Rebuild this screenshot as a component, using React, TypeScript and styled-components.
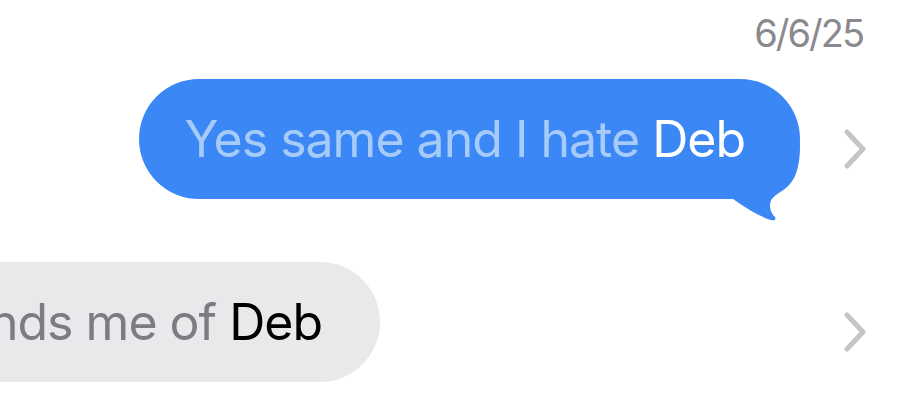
import React from "react";
import styled, { createGlobalStyle } from "styled-components";

const Global = createGlobalStyle`
  html, body { margin: 0; padding: 0; background: #ffffff; }
  body { overflow: hidden; font-family: Inter, "Noto Sans", "Liberation Sans", sans-serif; }
`;

const Screen = styled.div`
  width: 916px;
  height: 418px;
  overflow: hidden;
  display: flex;
  flex-direction: column;
  background: #ffffff;
`;

const DateLabel = styled.div`
  align-self: flex-end;
  margin: 14px 53px 0 0;
  font-size: 38px;
  line-height: 38px;
  color: #8a8a8e;
  letter-spacing: -2px;
`;

const Row = styled.div<{ $top: number }>`
  display: flex;
  align-items: center;
  margin-top: ${(p) => p.$top}px;
  height: 120px;
`;

const SentSide = styled.div`
  flex: 1;
  min-width: 0;
  display: flex;
  justify-content: flex-end;
`;

const ReceivedSide = styled.div`
  flex: 0 0 380px;
  min-width: 0;
  display: flex;
  justify-content: flex-end;
`;

const Spacer = styled.div`
  flex: 1;
`;

const Bubble = styled.div<{ $variant: "sent" | "received" }>`
  position: relative;
  flex: none;
  height: 120px;
  display: flex;
  align-items: center;
  white-space: nowrap;
  font-size: 50px;
  line-height: 1;
  letter-spacing: -1px;
  box-sizing: border-box;
  background: ${(p) => (p.$variant === "sent" ? "#3b87f5" : "#e9e9eb")};
  color: ${(p) => (p.$variant === "sent" ? "#a7cbf9" : "#7c7c81")};
  border-radius: 60px;
  padding: ${(p) => (p.$variant === "sent" ? "0 55px 0 45px" : "0 58px 0 45px")};
`;

const Text = styled.span`
  position: relative;
  z-index: 1;
`;

const Name = styled.span<{ $variant: "sent" | "received" }>`
  color: ${(p) => (p.$variant === "sent" ? "#ffffff" : "#000000")};
`;

const Tail = styled.svg`
  position: absolute;
  right: 0;
  bottom: -22px;
  width: 80px;
  height: 80px;
`;

const ChevronSlot = styled.div`
  flex: 0 0 116px;
  display: flex;
  padding: 20px 0 0 44px;
  box-sizing: border-box;
`;

const Chevron = () => (
  <svg width="24" height="40" viewBox="0 0 24 40">
    <polyline
      points="3,3 19,20 3,37"
      fill="none"
      stroke="#c5c5c8"
      strokeWidth="5"
      strokeLinecap="round"
      strokeLinejoin="round"
    />
  </svg>
);

export default function App() {
  return (
    <>
      <Global />
      <Screen>
        <DateLabel>6/6/25</DateLabel>
        <Row $top={27}>
          <SentSide>
            <Bubble $variant="sent">
              <Tail viewBox="0 0 80 80">
                <path
                  d="M0 0 H80 C80.5 22 77 38 66 47 C58 53 50 56 50 64 C50 70 53 74 55 76 C56.5 78.5 54 80 51 79 C44 77 30 70 16 60 L13 58 H0 Z"
                  fill="#3b87f5"
                />
              </Tail>
              <Text>
                Yes same and I hate <Name $variant="sent">Deb</Name>
              </Text>
            </Bubble>
          </SentSide>
          <ChevronSlot>
            <Chevron />
          </ChevronSlot>
        </Row>
        <Row $top={63}>
          <ReceivedSide>
            <Bubble $variant="received">
              <Text>
                That reminds me of <Name $variant="received">Deb</Name>
              </Text>
            </Bubble>
          </ReceivedSide>
          <Spacer />
          <ChevronSlot>
            <Chevron />
          </ChevronSlot>
        </Row>
      </Screen>
    </>
  );
}
